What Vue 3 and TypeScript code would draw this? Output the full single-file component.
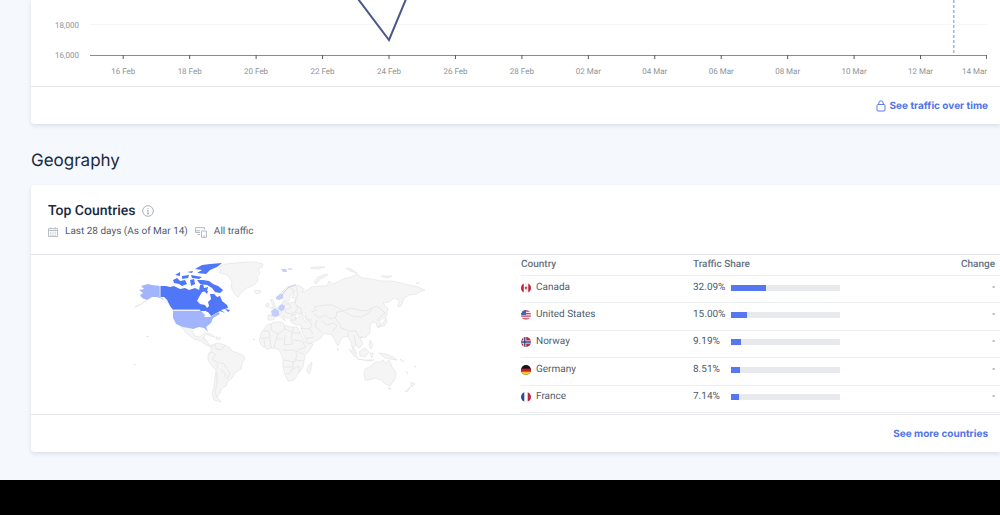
<script setup lang="ts">
interface Country {
  name: string
  flag: string
  share: number
  change: string
}

const yLabels: string[] = ['18,000', '16,000']
const xLabels: string[] = [
  '16 Feb', '18 Feb', '20 Feb', '22 Feb', '24 Feb', '26 Feb', '28 Feb',
  '02 Mar', '04 Mar', '06 Mar', '08 Mar', '10 Mar', '12 Mar', '14 Mar',
]
const countries: Country[] = [
  { name: 'Canada', flag: 'ca', share: 32.09, change: '-' },
  { name: 'United States', flag: 'us', share: 15, change: '-' },
  { name: 'Norway', flag: 'no', share: 9.19, change: '-' },
  { name: 'Germany', flag: 'de', share: 8.51, change: '-' },
  { name: 'France', flag: 'fr', share: 7.14, change: '-' },
]

const land: string[] = [
  // Greenland, Iceland
  'M220 267 L226 264 L236 263 L246 262 L256 262 L264 264 L263 267 L259 269 L261 273 L258 277 L259 281 L255 285 L248 288 L244 291 L241 294 L239 297 L236 295 L234 291 L232 287 L233 282 L230 277 L226 274 L220 273 L222 270 Z',
  'M255 291 L258 290 L262 291 L261 293 L257 294 Z',
  // Mexico and Central America
  'M180 325 L184 327 L190 328 L194 332 L196 336 L201 337 L204 334 L206 335 L204 339 L208 341 L210 345 L214 345 L212 347 L207 345 L202 341 L195 339 L188 334 L184 329 Z',
  'M205 333 L212 334 L216 337 L211 336 Z M217 337 L222 338 L220 340 L217 339 Z',
  // South America
  'M212 347 L215 344 L219 343 L226 345 L231 348 L233 351 L239 353 L245 356 L246 359 L243 363 L242 369 L236 373 L233 378 L229 381 L227 386 L223 388 L221 393 L218 397 L222 402 L215 400 L213 394 L215 387 L216 378 L217 370 L213 366 L209 360 L209 355 L212 351 Z',
  // Africa, Madagascar
  'M268 325 L276 322 L283 322 L285 325 L291 327 L298 327 L302 334 L306 342 L314 344 L311 350 L306 355 L305 361 L304 367 L299 374 L295 380 L289 381 L286 375 L284 367 L284 359 L282 353 L279 349 L273 348 L268 349 L263 346 L260 341 L262 333 Z',
  'M308 372 L309 366 L313 362 L312 369 L310 374 Z',
  // Eurasia
  'M278 297 L283 292 L288 287 L295 285 L301 286 L305 289 L303 292 L309 290 L312 287 L320 286 L328 286 L330 281 L334 284 L339 282 L344 279 L352 277 L358 274 L363 278 L372 279 L383 281 L393 281 L406 284 L419 287 L426 290 L420 292 L418 294 L410 295 L405 298 L402 306 L399 307 L400 300 L395 298 L390 302 L384 303 L389 309 L387 317 L383 319 L380 321 L382 326 L379 328 L377 323 L373 322 L371 326 L371 333 L367 337 L361 338 L364 344 L360 348 L357 345 L354 347 L358 354 L354 351 L352 342 L348 336 L344 337 L341 341 L339 346 L336 341 L333 335 L325 333 L322 338 L315 342 L309 344 L305 336 L302 329 L302 325 L297 325 L292 322 L291 318 L287 318 L284 315 L286 321 L281 316 L277 316 L274 320 L269 320 L269 315 L274 315 L273 311 L278 308 L282 305 L284 301 L290 303 L295 302 L297 298 L293 298 L295 291 L291 296 L290 301 L286 301 L283 298 L280 300 Z',
  // British Isles
  'M271 308 L274 307 L273 303 L271 300 L273 299 L276 304 L276 308 Z M267 304 L270 303 L270 307 L267 307 Z',
  // Arctic islands
  'M311 268 L317 267 L326 267 L318 269 Z M315 282 L319 277 L327 274 L329 275 L321 279 L317 284 Z M347 268 L352 269 L358 273 L351 271 Z M382 276 L393 276 L388 278 Z M417 283 L420 283 Z',
  // Japan, Philippines, Indonesia, New Guinea
  'M387 318 L388 322 L385 326 L379 327 L384 323 Z M371 340 L374 345 L372 349 L370 345 Z',
  'M350 349 L355 353 L359 358 L355 356 Z M360 352 L366 348 L370 352 L366 357 L361 356 Z M358 359 L366 360 L375 360 L370 361 Z M371 353 L374 353 L373 358 Z M380 353 L387 354 L394 357 L398 360 L391 359 L386 358 Z',
  // Australia, Tasmania, New Zealand
  'M365 373 L366 369 L372 366 L376 362 L381 362 L384 360 L387 364 L390 360 L393 367 L397 373 L396 379 L391 386 L386 384 L382 380 L376 378 L370 380 L366 380 Z M389 388 L392 388 L391 390 Z',
  'M412 382 L416 384 L412 387 Z M411 387 L406 392 L409 391 Z M401 359 L405 362 Z M407 371 L409 374 Z M415 366 L417 367 Z',
  'M338 348 L340 350 L339 351 Z M147 336 L150 337 Z M135 364 L137 365 Z M254 339 L256 340 Z',
]

const borders: string[] = [
  // Europe and western Asia
  'M290 287 L295 291 M297 286 L299 295 L297 299 L296 303 L299 308 L296 312 M285 304 L290 304 L292 308 L287 309 L286 312 L291 314 L298 312 L302 314 L302 308 L297 306 M279 308 L283 312 L280 315 M270 315 L273 317 M292 316 L296 315 L297 320 L292 320 M302 314 L306 316 L308 320 L313 320',
  // Central and eastern Asia
  'M312 312 L318 310 L315 307 L325 305 L333 305 L340 308 L344 311 L338 312 L337 317 L331 319 L326 315 L320 318 L315 314 M344 311 L352 308 L360 310 L367 311 L373 308 L370 313 L362 317 L353 316 L344 311 M373 308 L378 306 L386 313 L381 317 L378 321 M336 318 L340 323 L342 328 L350 331 L357 331 L360 337 L364 337',
  'M323 321 L328 325 L335 323 L338 326 L333 332 M318 320 L316 326 L322 332 M311 321 L313 326 L309 329 L302 328 M310 328 L314 334 M306 339 L314 337 M349 332 L349 337 M355 335 L357 345',
  // Africa
  'M272 324 L272 330 L279 334 L286 329 L285 325 M294 327 L294 333 L302 333 M286 329 L293 332 L292 339 L294 344 L285 345 L286 335 M279 334 L277 339 L284 339 M264 331 L270 331 L271 338 L262 338 M265 339 L266 347 M271 339 L272 348 M277 340 L275 348 M294 340 L303 341 L307 347 L299 350 M284 350 L295 350 L298 354 L296 362 L285 360 M297 351 L305 354 M297 360 L304 361 M285 367 L294 367 L294 362 M294 367 L291 373 L287 374 M294 369 L300 366 L300 372',
  // Americas
  'M216 344 L217 349 L222 350 L226 345 M209 354 L213 352 L217 355 L213 359 L218 362 L219 366 L217 369 M219 362 L225 364 L228 369 L231 373 L228 379 M218 372 L218 382 L216 393 L218 397 M222 370 L227 374 L225 377 M204 337 L207 340',
]
</script>

<template>
  <main class="page">
    <section class="card chart-card" aria-label="Traffic over time">
      <div class="chart">
        <div class="y-axis">
          <span v-for="label in yLabels" :key="label">{{ label }}</span>
        </div>
        <div class="plot">
          <svg class="plot-svg" viewBox="0 0 270 60" preserveAspectRatio="none" aria-hidden="true">
            <line x1="0" y1="24.5" x2="270" y2="24.5" stroke="#f5f6f7" />
            <line x1="0" y1="55.5" x2="270" y2="55.5" stroke="#888b8f" />
            <line v-for="n in 13" :key="n" :x1="n * 20 - 10" y1="55" :x2="n * 20 - 10" y2="59" stroke="#55585e" />
            <line x1="269.9" y1="55" x2="269.9" y2="59" stroke="#55585e" />
            <line x1="260" y1="0" x2="260" y2="55" stroke="#9bbcda" stroke-width="1.5" stroke-dasharray="3 2" />
            <polyline points="80,-4 90,40 100,-40" fill="none" stroke="#4b5787" stroke-width="2" />
          </svg>
          <div class="x-axis">
            <span v-for="label in xLabels" :key="label">{{ label }}</span>
          </div>
        </div>
      </div>
      <footer class="card-footer">
        <a href="#traffic" class="link">
          <svg width="10" height="12" viewBox="0 0 10 12" fill="none" stroke="#5b7be8" aria-hidden="true">
            <rect x="1" y="4.5" width="8" height="6.5" rx="1" />
            <path d="M2.8 4.5 V3 a2.2 2.2 0 0 1 4.4 0 V4.5" />
          </svg>
          See traffic over time
        </a>
      </footer>
    </section>

    <h2 class="section-title">Geography</h2>

    <section class="card">
      <header class="card-header">
        <h3 class="card-title">
          Top Countries
          <svg width="12" height="12" viewBox="0 0 12 12" fill="none" stroke="#a9b0b9" role="img" aria-label="Info">
            <circle cx="6" cy="6" r="5.3" />
            <path d="M6 5.2 V9 M6 3 V4.2 M5 5.5 H6 M5 8.8 H7" />
          </svg>
        </h3>
        <p class="meta">
          <svg width="10" height="10" viewBox="0 0 11 11" fill="none" stroke="#b3b9c1" aria-hidden="true">
            <path d="M.5 1.8 H10.5 V10.5 H.5 Z M.5 3.8 H10.5 M3 .3 V2.5 M8 .3 V2.5" />
            <path d="M2 5.7 H9 M2 7.5 H9 M2 9.2 H9" stroke-dasharray="1 1" />
          </svg>
          <span>Last 28 days (As of Mar 14)</span>
          <svg width="12" height="11" viewBox="0 0 12 11" fill="none" stroke="#b3b9c1" aria-hidden="true">
            <path d="M9.5 2.5 V.6 H.6 V5.5 H5 M.6 3.8 H5 M2.5 7.5 H5" />
            <path d="M6.5 4 H11.4 V10.4 H6.5 Z M8 9 H10" />
          </svg>
          <span>All traffic</span>
        </p>
      </header>

      <div class="geo">
        <div class="map-pane">
          <svg class="map" viewBox="130 258 300 150" role="img" aria-label="World map of traffic share">
            <g fill="#f5f5f6" stroke="#dfe0e2" stroke-width="0.6" stroke-linejoin="round">
              <path v-for="d in land" :key="d" :d="d" />
            </g>
            <path d="M303 312 L307 313 L306 318 L309 320 L306 322 L304 317 Z M292 315 L299 314 L301 317 L295 318 Z" fill="#fff" stroke="#dfe0e2" stroke-width="0.5" />
            <g fill="none" stroke="#dddee0" stroke-width="0.6">
              <path v-for="d in borders" :key="d" :d="d" />
            </g>
            <g fill="#5077f8">
              <path d="M161 286 L167 286 L171 287 L175 286 L181 289 L186 288 L190 290 L196 288 L200 290 L201 285 L204 284 L205 288 L209 287 L208 291 L203 292 L200 297 L198 301 L201 304 L206 305 L208 308 L210 306 L209 302 L212 299 L211 294 L215 294 L218 297 L221 296 L223 301 L228 305 L229 308 L222 310 L226 313 L221 311 L212 316 L209 312 L202 311 L200 310 L174 310 L171 306 L168 300 L165 297 L161 297 Z" />
              <path d="M174 280 L178 278 L181 281 L186 280 L188 284 L183 286 L180 284 L175 283 Z M176 275 L181 272 L181 276 Z M183 276 L190 275 L189 278 L183 279 Z M191 280 L195 279 L196 284 L192 286 Z M192 275 L203 277 L200 279 L193 278 Z M198 280 L204 280 L210 281 L214 284 L219 286 L224 290 L221 293 L216 292 L213 288 L208 285 L201 284 Z M196 269 L203 265 L211 264 L223 263 L218 267 L211 270 L207 274 L198 273 L203 270 Z M188 272 L194 271 L193 273 Z M226 309 L231 310 L229 312 Z M205 291 L209 291 L208 294 Z" />
            </g>
            <g fill="#a2b4fb">
              <path d="M161 286 L153 285 L149 284 L142 286 L145 289 L140 290 L144 293 L141 295 L143 298 L148 300 L153 297 L157 297 L161 298 L166 301 L168 304 L164 299 L161 297 Z" />
              <path d="M174 311 L202 311 L208 313 L205 317 L211 317 L219 312 L221 314 L214 318 L212 323 L207 327 L209 332 L205 328 L200 327 L194 329 L190 328 L184 327 L177 324 L174 318 Z" />
            </g>
            <path d="M202 311 L207 311 L209 315 L207 316 L204 313 Z" fill="#fff" />
            <path d="M136 307 L142 304 L148 300" fill="none" stroke="#dfe0e2" />
            <path d="M161 286 V297 M174 310 H201" fill="none" stroke="#dce4ff" />
            <g fill="#c3cefb">
              <path d="M277 297 L281 294 L284 294 L284 298 L280 300 L277 299 Z" />
              <path d="M280 306 L283 304 L286 306 L285 310 L282 311 L279 309 Z" />
              <path d="M272 311 L276 308 L280 311 L280 315 L277 317 L273 316 Z" />
              <path d="M282 269 L287 269 L288 272 L284 272 Z M289 268 L295 269 L290 270 Z" />
            </g>
            <path d="M283 295 L286 291 L290 287 L297 285" fill="none" stroke="#c9d1f2" />
          </svg>
        </div>

        <table class="table">
          <thead>
            <tr>
              <th scope="col" class="col-country">Country</th>
              <th scope="col">Traffic Share</th>
              <th scope="col" class="change">Change</th>
            </tr>
          </thead>
          <tbody>
            <tr v-for="c in countries" :key="c.name">
              <td>
                <span class="country">
                  <svg class="flag" width="10" height="10" viewBox="0 0 10 10" aria-hidden="true">
                    <template v-if="c.flag === 'ca'">
                      <rect width="10" height="10" fill="#f8f4f5" />
                      <path d="M0 0 H2.7 V10 H0 Z M7.3 0 H10 V10 H7.3 Z M5 3 L5.5 4.2 L6.5 4.5 L5.7 5.8 H5.2 V7 H4.8 V5.8 H4.3 L3.5 4.5 L4.5 4.2 Z" fill="#b92136" />
                    </template>
                    <template v-else-if="c.flag === 'us'">
                      <rect width="10" height="10" fill="#f7eef0" />
                      <path d="M0 1 H10 M0 3.6 H10 M0 6.2 H10 M0 8.8 H10" stroke="#c8405a" stroke-width="1.3" />
                      <rect width="5" height="5" fill="#4a62a8" />
                    </template>
                    <template v-else-if="c.flag === 'no'">
                      <rect width="10" height="10" fill="#b92846" />
                      <path d="M3.8 0 V10 M0 5 H10" stroke="#fff" stroke-width="2.8" />
                      <path d="M3.8 0 V10 M0 5 H10" stroke="#2d4887" stroke-width="1.4" />
                    </template>
                    <template v-else-if="c.flag === 'de'">
                      <rect width="10" height="10" fill="#171313" />
                      <rect y="3.7" width="10" height="3.3" fill="#c81e24" />
                      <rect y="6.7" width="10" height="3.3" fill="#f7c934" />
                    </template>
                    <template v-else>
                      <rect width="10" height="10" fill="#fff" />
                      <rect width="3.3" height="10" fill="#2b4a9d" />
                      <rect x="6.7" width="3.3" height="10" fill="#c2243b" />
                    </template>
                  </svg>
                  {{ c.name }}
                </span>
              </td>
              <td>
                <span class="share">
                  <span class="value">{{ c.share.toFixed(2) }}%</span>
                  <span class="track"><span class="fill" :style="{ width: c.share + '%' }"></span></span>
                </span>
              </td>
              <td class="change">{{ c.change }}</td>
            </tr>
          </tbody>
        </table>
      </div>

      <footer class="card-footer">
        <a href="#countries" class="link">See more countries</a>
      </footer>
    </section>
  </main>
</template>

<style>
body {
  margin: 0;
  background: #000;
}
</style>

<style scoped>
.page {
  padding: 0 0 28px 31px;
  background: #f5f8fd;
  color: #4f5d6d;
  font-family: Roboto, "Liberation Sans", sans-serif;
  text-rendering: geometricPrecision;
  overflow: hidden;
}
.card {
  background: #fff;
  border-radius: 4px 0 0 4px;
  box-shadow: 0 2px 4px rgba(30, 50, 90, 0.12);
}
.chart-card {
  border-radius: 0 0 0 4px;
}
.chart {
  display: flex;
  height: 86px;
  padding-right: 13px;
}
.y-axis {
  display: flex;
  flex-direction: column;
  gap: 20px;
  width: 48px;
  padding: 21px 11px 0 0;
  text-align: right;
  font-size: 8px;
  line-height: 10px;
  color: #8f9296;
}
.plot {
  flex: 1;
}
.plot-svg {
  display: block;
  width: 100%;
  height: 60px;
}
.plot-svg * {
  vector-effect: non-scaling-stroke;
}
.x-axis {
  display: grid;
  grid-template-columns: repeat(13, minmax(0, 2fr)) minmax(0, 1fr);
  padding-top: 7px;
  font-size: 8px;
  line-height: 10px;
  text-align: center;
  white-space: nowrap;
  color: #8f9296;
}
.x-axis span:last-child {
  justify-self: end;
}
.card-footer {
  display: flex;
  align-items: center;
  justify-content: flex-end;
  box-sizing: border-box;
  height: 38px;
  padding-right: 12px;
  border-top: 1px solid #e6e8eb;
}
.link {
  display: flex;
  align-items: center;
  gap: 4px;
  font: 700 10px/14px Inter, "Open Sans", sans-serif;
  color: #5074e8;
  text-decoration: none;
}
.section-title {
  margin: 25px 0 12px;
  font: 400 17px/24px Inter, "Open Sans", sans-serif;
  color: #1b2a41;
}
.card-header {
  height: 70px;
  box-sizing: border-box;
  padding: 17px 17px 0;
  border-bottom: 1px solid #dfe2e6;
}
.card-title {
  display: flex;
  align-items: center;
  gap: 7px;
  margin: 0;
  font-size: 14px;
  line-height: 18px;
  font-weight: 500;
  color: #1b2a41;
}
.meta {
  display: flex;
  align-items: center;
  gap: 7px;
  margin: 5px 0 0;
  font-size: 10px;
  line-height: 14px;
}
.geo {
  display: grid;
  grid-template-columns: 490fr 479fr;
  height: 159px;
}
.map-pane {
  display: flex;
  justify-content: center;
  padding: 3px 0 0 6px;
}
.map {
  width: 62%;
  height: 150px;
}
.table {
  width: 100%;
  height: 158px;
  table-layout: fixed;
  border-collapse: separate;
  border-spacing: 0;
  font-size: 10px;
  line-height: 14px;
}
.table th,
.table td {
  padding: 0;
  text-align: left;
  border-bottom: 1px solid #eceef0;
}
.table td {
  padding-bottom: 3px;
}
.table th {
  height: 20px;
  font-weight: 500;
  color: #667281;
}
.table .col-country {
  width: 172px;
}
.table .change {
  width: 20%;
  padding-right: 5px;
  text-align: right;
}
.country {
  display: flex;
  align-items: center;
  gap: 5px;
}
.flag {
  border-radius: 50%;
}
.share {
  display: flex;
  align-items: center;
}
.value {
  width: 38px;
}
.track {
  width: 109px;
  height: 6px;
  background: #e8e9ec;
}
.fill {
  display: block;
  height: 100%;
  background: #5577f0;
}
</style>
